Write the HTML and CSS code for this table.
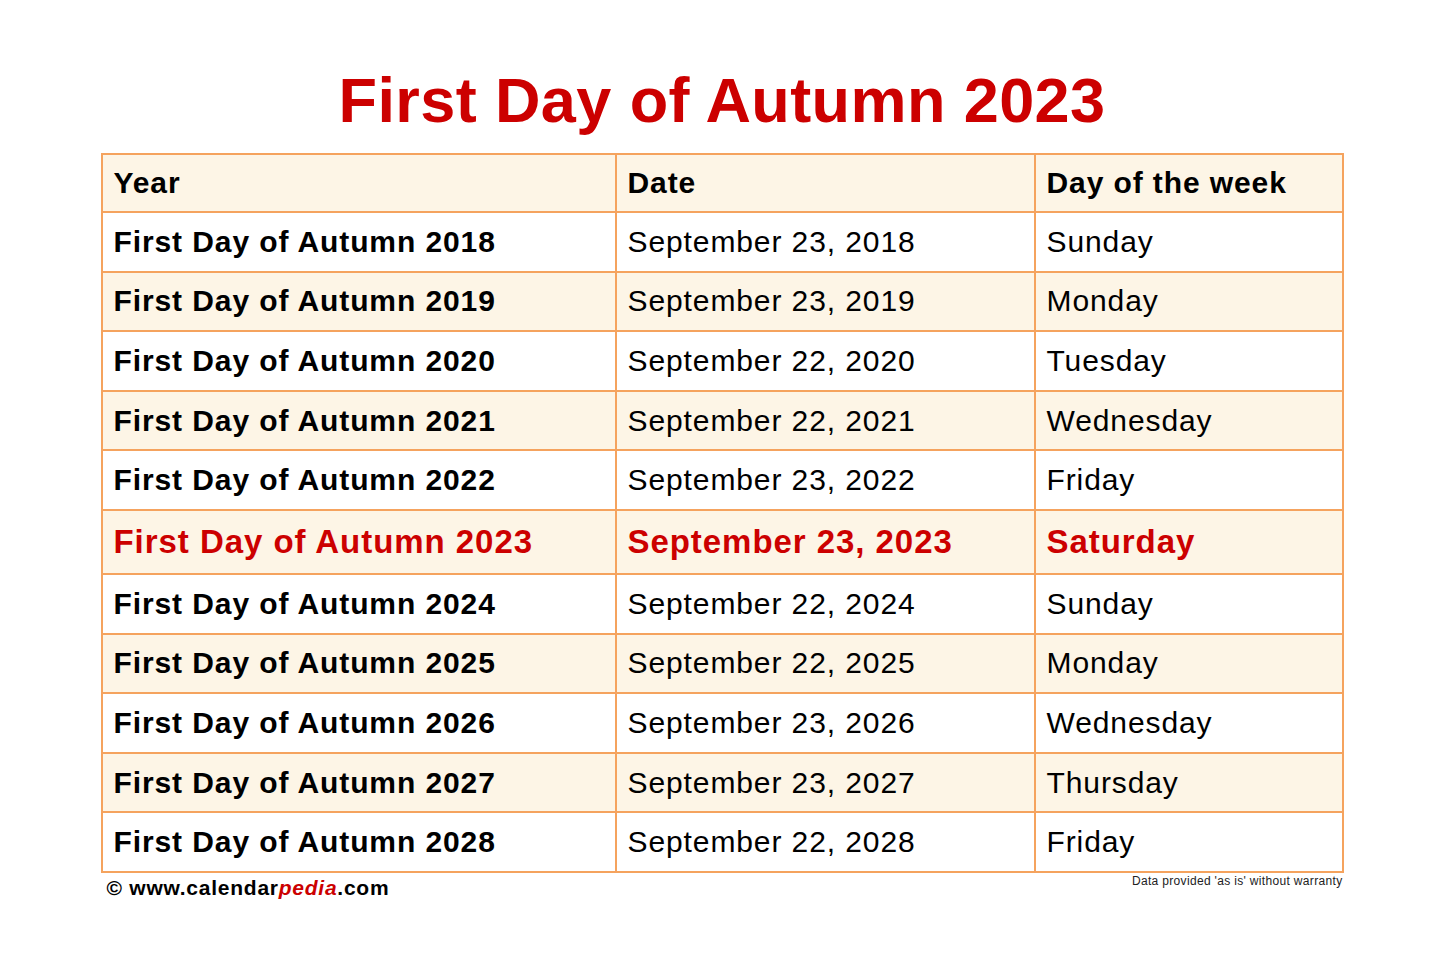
FILE: index.html
```html
<!DOCTYPE html>
<html lang="en">
<head>
<meta charset="utf-8">
<title>First Day of Autumn 2023</title>
<link rel="stylesheet" href="styles.css">
</head>
<body>
<main class="page">
  <h1 class="title">First Day of Autumn 2023</h1>
  <table class="dates">
    <colgroup>
      <col class="c-year">
      <col class="c-date">
      <col class="c-day">
    </colgroup>
    <thead>
      <tr class="head"><th>Year</th><th>Date</th><th>Day of the week</th></tr>
    </thead>
    <tbody>
      <tr><td class="name">First Day of Autumn 2018</td><td>September 23, 2018</td><td>Sunday</td></tr>
      <tr class="alt"><td class="name">First Day of Autumn 2019</td><td>September 23, 2019</td><td>Monday</td></tr>
      <tr><td class="name">First Day of Autumn 2020</td><td>September 22, 2020</td><td>Tuesday</td></tr>
      <tr class="alt"><td class="name">First Day of Autumn 2021</td><td>September 22, 2021</td><td>Wednesday</td></tr>
      <tr><td class="name">First Day of Autumn 2022</td><td>September 23, 2022</td><td>Friday</td></tr>
      <tr class="alt current"><td class="name">First Day of Autumn 2023</td><td>September 23, 2023</td><td>Saturday</td></tr>
      <tr><td class="name">First Day of Autumn 2024</td><td>September 22, 2024</td><td>Sunday</td></tr>
      <tr class="alt"><td class="name">First Day of Autumn 2025</td><td>September 22, 2025</td><td>Monday</td></tr>
      <tr><td class="name">First Day of Autumn 2026</td><td>September 23, 2026</td><td>Wednesday</td></tr>
      <tr class="alt"><td class="name">First Day of Autumn 2027</td><td>September 23, 2027</td><td>Thursday</td></tr>
      <tr><td class="name">First Day of Autumn 2028</td><td>September 22, 2028</td><td>Friday</td></tr>
    </tbody>
  </table>
  <footer class="foot">
    <div class="brand">© www.calendar<span class="brand-em">pedia</span>.com</div>
    <div class="note">Data provided 'as is' without warranty</div>
  </footer>
</main>
</body>
</html>
```

FILE: styles.css
```css
html, body {
  margin: 0;
  padding: 0;
  background: #ffffff;
}

body {
  font-family: "Liberation Sans", Arial, sans-serif;
  color: #000000;
}

.page {
  width: 1243px;
  margin: 0 auto;
}

.title {
  margin: 0 0 17px 0;
  padding-top: 64px;
  font-size: 63px;
  line-height: 72px;
  font-weight: bold;
  letter-spacing: 0.4px;
  color: #cc0000;
  text-align: center;
}

.dates {
  width: 1241px;
  border-collapse: collapse;
  table-layout: fixed;
  border: 2px solid #f5a35e;
}

.c-year { width: 514px; }
.c-date { width: 419px; }
.c-day { width: 308px; }

.dates th,
.dates td {
  border: 2px solid #f5a35e;
  height: 57.6px;
  padding: 0 0 0 11px;
  font-size: 30px;
  letter-spacing: 0.9px;
  line-height: 34px;
  text-align: left;
  vertical-align: middle;
  white-space: nowrap;
}

.dates th {
  height: 56px;
  font-weight: bold;
}

.head,
.alt {
  background: #fdf5e6;
}

.dates td.name {
  font-weight: bold;
}

.current td {
  height: 62px;
  font-size: 33px;
  letter-spacing: 0.95px;
  font-weight: bold;
  color: #cc0000;
}

.foot {
  display: flex;
  justify-content: space-between;
  align-items: flex-start;
}

.brand {
  margin-top: 3px;
  padding-left: 6px;
  font-size: 21px;
  line-height: 24px;
  letter-spacing: 0.75px;
  font-weight: bold;
}

.brand-em {
  color: #cc0000;
  font-style: italic;
}

.note {
  margin-top: 1px;
  padding-right: 1px;
  font-size: 12px;
  line-height: 14px;
  letter-spacing: 0.33px;
  color: #222222;
}
```
